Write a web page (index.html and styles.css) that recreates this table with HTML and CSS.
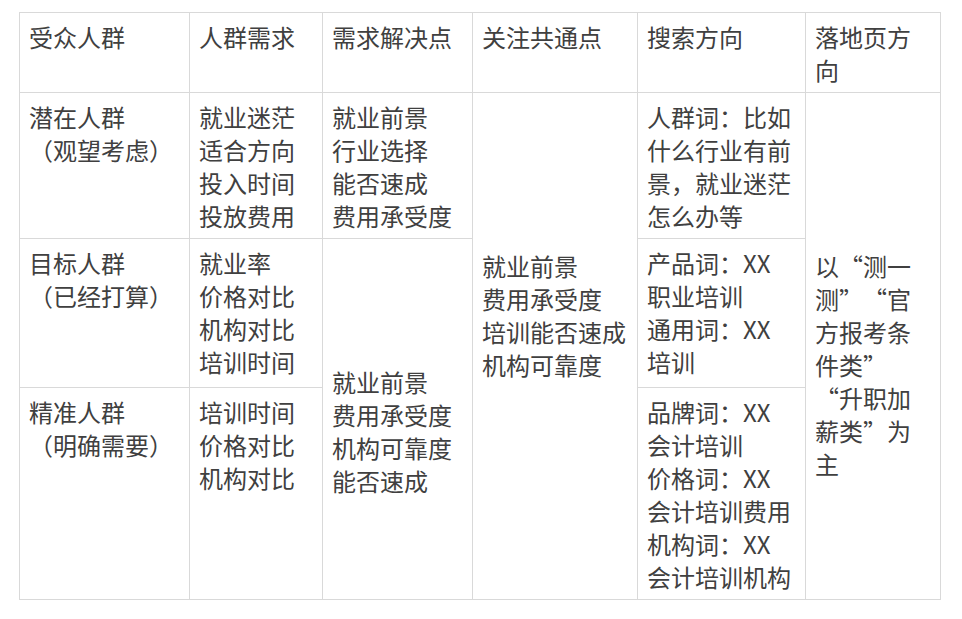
FILE: index.html
```html
<!DOCTYPE html>
<html lang="zh-CN">
<head>
<meta charset="utf-8">
<title>受众人群</title>
<link rel="stylesheet" href="styles.css">
</head>
<body>
<div class="page">
<table class="grid">
  <colgroup>
    <col class="c1"><col class="c2"><col class="c3"><col class="c4"><col class="c5"><col class="c6">
  </colgroup>
  <tr class="r1">
    <td>受众人群</td>
    <td>人群需求</td>
    <td>需求解决点</td>
    <td>关注共通点</td>
    <td>搜索方向</td>
    <td>落地页方<br>向</td>
  </tr>
  <tr class="r2">
    <td>潜在人群<br>（观望考虑）</td>
    <td>就业迷茫<br>适合方向<br>投入时间<br>投放费用</td>
    <td>就业前景<br>行业选择<br>能否速成<br>费用承受度</td>
    <td rowspan="3" class="span-common">就业前景<br>费用承受度<br>培训能否速成<br>机构可靠度</td>
    <td>人群词：比如<br>什么行业有前<br>景，就业迷茫<br>怎么办等</td>
    <td rowspan="3" class="span-common">以<span class="qo">“</span>测一<br>测<span class="qc">”</span><span class="qo">“</span>官<br>方报考条<br>件类<span class="qc">”</span><br><span class="qo">“</span>升职加<br>薪类<span class="qc">”</span>为<br>主</td>
  </tr>
  <tr class="r3">
    <td>目标人群<br>（已经打算）</td>
    <td>就业率<br>价格对比<br>机构对比<br>培训时间</td>
    <td rowspan="2" class="span-solve">就业前景<br>费用承受度<br>机构可靠度<br>能否速成</td>
    <td>产品词：XX<br>职业培训<br>通用词：XX<br>培训</td>
  </tr>
  <tr class="r4">
    <td>精准人群<br>（明确需要）</td>
    <td>培训时间<br>价格对比<br>机构对比</td>
    <td>品牌词：XX<br>会计培训<br>价格词：XX<br>会计培训费用<br>机构词：XX<br>会计培训机构</td>
  </tr>
</table>
</div>
</body>
</html>
```

FILE: styles.css
```css
html, body {
  margin: 0;
  padding: 0;
  background: #ffffff;
}

.page {
  padding: 12px 0 0 19px;
}

.grid {
  border-collapse: collapse;
  table-layout: fixed;
  width: 921px;
  font-family: "Noto Sans CJK SC", "Noto Sans", sans-serif;
  font-size: 24px;
  line-height: 33px;
  color: #404040;
}

.c1 { width: 170px; }
.c2 { width: 133px; }
.c3 { width: 150px; }
.c4 { width: 165px; }
.c5 { width: 168px; }
.c6 { width: 135px; }

.grid td {
  border: 1px solid #d9d9d9;
  padding: 7px 9px 6px 9px;
  vertical-align: top;
  white-space: nowrap;
}

.r1 { height: 80px; }
.r2 { height: 146px; }
.r3 { height: 149px; }
.r4 { height: 212px; }

.grid td.span-common {
  padding-top: 156px;
}

.grid td.span-solve {
  padding-top: 126px;
}

.qo,
.qc {
  display: inline-block;
  width: 24px;
}

.qo { text-align: right; }
.qc { text-align: left; }
```
